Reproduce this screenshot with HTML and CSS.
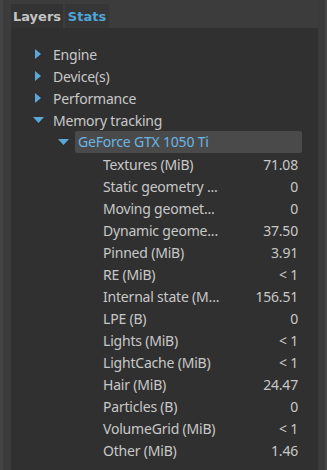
FILE: index.html
```html
<!DOCTYPE html>
<html lang="en">
<head>
    <meta charset="UTF-8">
    <meta name="viewport" content="width=device-width, initial-scale=1.0">
    <title>Stats</title>
    <link rel="stylesheet" href="styles.css">
</head>
<body>
    <div class="window">
        <div class="rail"></div>
        <div class="dock">
            <div class="tabs">
                <div class="tab">Layers</div>
                <div class="tab active">Stats</div>
            </div>
            <div class="panel">
                <div class="row level-0">
                    <span class="caret"><svg width="6" height="10" viewBox="0 0 6 10"><path d="M0 0 L6 5 L0 10 Z"/></svg></span>
                    <span class="name">Engine</span>
                </div>
                <div class="row level-0">
                    <span class="caret"><svg width="6" height="10" viewBox="0 0 6 10"><path d="M0 0 L6 5 L0 10 Z"/></svg></span>
                    <span class="name">Device(s)</span>
                </div>
                <div class="row level-0">
                    <span class="caret"><svg width="6" height="10" viewBox="0 0 6 10"><path d="M0 0 L6 5 L0 10 Z"/></svg></span>
                    <span class="name">Performance</span>
                </div>
                <div class="row level-0">
                    <span class="caret"><svg width="11" height="6" viewBox="0 0 11 6"><path d="M0 0 L11 0 L5.5 6 Z"/></svg></span>
                    <span class="name">Memory tracking</span>
                </div>
                <div class="row level-1">
                    <span class="caret"><svg width="11" height="6" viewBox="0 0 11 6"><path d="M0 0 L11 0 L5.5 6 Z"/></svg></span>
                    <span class="device">GeForce GTX 1050 Ti</span>
                </div>
                <div class="row level-2"><span class="label">Textures (MiB)</span><span class="value">71.08</span></div>
                <div class="row level-2"><span class="label">Static geometry ...</span><span class="value">0</span></div>
                <div class="row level-2"><span class="label">Moving geomet...</span><span class="value">0</span></div>
                <div class="row level-2"><span class="label">Dynamic geome...</span><span class="value">37.50</span></div>
                <div class="row level-2"><span class="label">Pinned (MiB)</span><span class="value">3.91</span></div>
                <div class="row level-2"><span class="label">RE (MiB)</span><span class="value">&lt; 1</span></div>
                <div class="row level-2"><span class="label">Internal state (M...</span><span class="value">156.51</span></div>
                <div class="row level-2"><span class="label">LPE (B)</span><span class="value">0</span></div>
                <div class="row level-2"><span class="label">Lights (MiB)</span><span class="value">&lt; 1</span></div>
                <div class="row level-2"><span class="label">LightCache (MiB)</span><span class="value">&lt; 1</span></div>
                <div class="row level-2"><span class="label">Hair (MiB)</span><span class="value">24.47</span></div>
                <div class="row level-2"><span class="label">Particles (B)</span><span class="value">0</span></div>
                <div class="row level-2"><span class="label">VolumeGrid (MiB)</span><span class="value">&lt; 1</span></div>
                <div class="row level-2"><span class="label">Other (MiB)</span><span class="value">1.46</span></div>
            </div>
        </div>
        <div class="scrollbar"></div>
        <div class="edge"></div>
    </div>
</body>
</html>
```

FILE: styles.css
```css
body {
    margin: 0;
    background-color: #3c3c3c;
    font-family: "Noto Sans", "Open Sans", sans-serif;
    color: #c8c8c8;
}

.window {
    display: flex;
    height: 470px;
    overflow: hidden;
}

.rail {
    width: 3px;
    background-color: #444444;
}

.dock {
    display: flex;
    flex-direction: column;
    width: 307px;
    margin-left: 8px;
    padding-top: 4px;
}

.tabs {
    display: flex;
    gap: 2px;
    height: 24px;
}

.tab {
    display: flex;
    align-items: center;
    justify-content: center;
    width: 52px;
    padding-top: 1px;
    background-color: #333333;
    font-family: "DejaVu Sans", sans-serif;
    font-size: 13px;
    font-weight: bold;
    color: #c4c4c4;
}

.tab.active {
    width: 44px;
    background-color: #363636;
    color: #4ea6d8;
}

.panel {
    flex: 1;
    background-color: #303030;
    padding: 15px 20px 0 0;
    font-size: 14px;
    letter-spacing: -0.2px;
}

.row {
    display: flex;
    align-items: center;
    height: 22px;
    white-space: nowrap;
}

.level-0 {
    padding-left: 19px;
}

.level-1 {
    padding-left: 44px;
}

.level-2 {
    padding-left: 92px;
}

.caret {
    display: flex;
    justify-content: center;
    align-items: center;
    width: 16px;
    fill: #5aa8d8;
}

.name {
    margin-left: 7px;
}

.device {
    flex: 1;
    margin-left: 4px;
    margin-right: -4px;
    padding-left: 3px;
    line-height: 22px;
    background-color: #4a4a4a;
    border-radius: 2px;
    color: #6cb4e2;
}

.label {
    width: 130px;
}

.value {
    flex: 1;
    text-align: right;
}

.scrollbar {
    width: 7px;
    background-color: #3a3a3a;
}

.edge {
    width: 2px;
    background-color: #454545;
}
```
